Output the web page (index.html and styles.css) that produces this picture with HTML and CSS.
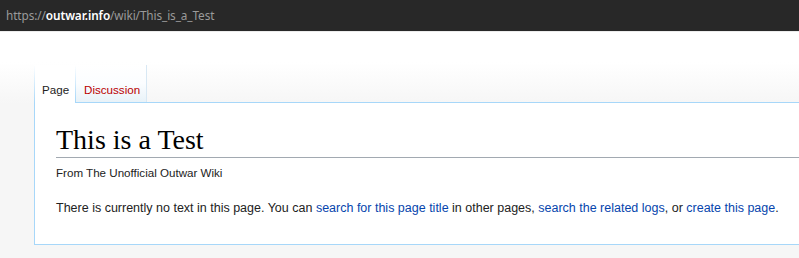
FILE: index.html
```html
<html>
<head>
    <title>This is a Test - The Unofficial Outwar Wiki</title>
    <link rel="stylesheet" href="styles.css">
</head>
<body>
    <div class="urlbar">
        <span class="scheme">https://</span><span class="host">outwar.info</span><span class="path">/wiki/This_is_a_Test</span>
    </div>
    <div class="page">
        <div class="tabs">
            <a class="tab selected" href="#">Page</a>
            <a class="tab new" href="#">Discussion</a>
        </div>
        <div class="content">
            <h1 class="title">This is a Test</h1>
            <div class="tagline">From The Unofficial Outwar Wiki</div>
            <p class="notext">There is currently no text in this page. You can <a href="#">search for this page title</a> in other pages, <a href="#">search the related logs</a>, or <a href="#">create this page</a>.</p>
        </div>
    </div>
</body>
</html>
```

FILE: styles.css
```css
body {
    margin: 0;
    background: #f6f6f6;
    font-family: "Liberation Sans", Arial, sans-serif;
    color: #222;
    overflow: hidden;
}
.urlbar {
    height: 31px;
    background: #282828;
    border-bottom: 1px solid #ececec;
    padding-left: 6px;
    font-family: "Noto Sans", sans-serif;
    font-size: 11.8px;
    letter-spacing: -0.1px;
    line-height: 30px;
    color: #9a9a9a;
}
.urlbar .host { color: #fff; font-weight: 600; }
.page {
    box-sizing: border-box;
    background: linear-gradient(#fff 0, #fff 30px, #f6f6f6 72px, #f6f6f6 100%);
    padding-top: 33px;
    height: 226px;
}
.tabs {
    display: flex;
    margin-left: 34px;
    height: 37px;
    position: relative;
    z-index: 1;
}
.tab {
    display: block;
    height: 37px;
    padding: 0 7px 0 8px;
    font-size: 11.6px;
    line-height: 50px;
    text-decoration: none;
    color: #222;
    background:
        linear-gradient(rgba(167, 215, 249, 0), #a7d7f9) left top / 1px 100% no-repeat,
        linear-gradient(#fff 0, #fbfdff 50%, #e8f2f8 100%);
}
.tab.selected {
    background:
        linear-gradient(rgba(167, 215, 249, 0), #a7d7f9) left top / 1px 100% no-repeat,
        #fff;
    height: 38px;
    padding-right: 6px;
}
.tab.new {
    color: #ba0000;
    padding: 0 6px 0 9px;
    border-right: 1px solid #d8e8f4;
}
.content {
    margin-left: 34px;
    border: 1px solid #a7d7f9;
    border-right: none;
    background: #fff;
    height: 141px;
    padding: 0 0 0 21px;
}
.title {
    margin: 0;
    padding-top: 19px;
    font-family: "Liberation Serif", Georgia, serif;
    font-weight: normal;
    font-size: 28px;
    line-height: 35px;
    border-bottom: 1px solid #a2a9b1;
    color: #000;
}
.tagline {
    margin-top: 8px;
    font-size: 11.6px;
    line-height: 14px;
    color: #222;
}
.notext {
    margin: 20px 0 0;
    font-size: 12.5px;
    line-height: 16px;
    white-space: nowrap;
}
.notext a {
    color: #0645ad;
    text-decoration: none;
}
```
